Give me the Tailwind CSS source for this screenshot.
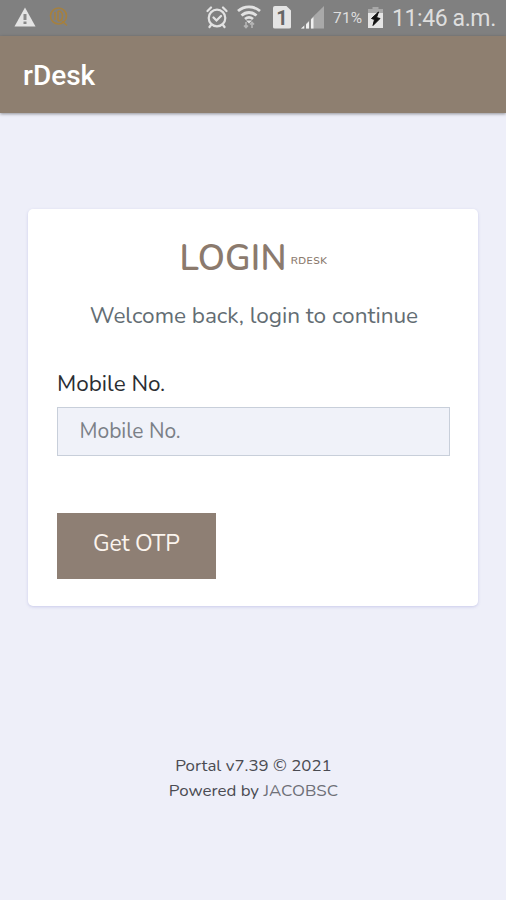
<!DOCTYPE html>
<html lang="en">
<head>
    <meta charset="UTF-8">
    <meta name="viewport" content="width=device-width, initial-scale=1.0">
    <title>rDesk - Login</title>
    <script src="https://cdn.jsdelivr.net/npm/@tailwindcss/browser@4"></script>
</head>
<body class="bg-[#eeeff9] font-['Nunito','Lato',sans-serif] h-[900px] overflow-hidden flex flex-col">
    <!-- Status bar -->
    <div class="h-9 shrink-0 bg-[#808080] flex items-center pl-[14px] pr-[10px] font-['Roboto',sans-serif] text-[#dedede]">
        <svg class="w-[22px] h-[20px] -mt-0.5" viewBox="0 0 22 20">
            <path d="M11 0.500L21.500 19.500H.5z" fill="#e4e4e4"/>
            <path d="M11 7v6M11 14.500v2.500" stroke="#8a8a8a" stroke-width="3"/>
        </svg>
        <svg class="w-5 h-5 ml-[13px] -mt-0.5" viewBox="0 0 20 20" fill="none" stroke="#a5803f" stroke-width="1.600">
            <circle cx="9.500" cy="9" r="8"/>
            <path d="M6 5v8M9 4v10M9 4c3.500 0 4.500 2 4.500 5s-1 5-4.500 5M13 14l5 4.500"/>
        </svg>
        <div class="ml-auto flex items-center">
            <!-- Alarm -->
            <svg class="w-[22px] h-6 -mt-0.5" viewBox="0 0 22 24" fill="none" stroke="#e2e2e2" stroke-width="2.200" stroke-linecap="round">
                <circle cx="11" cy="13" r="8.300"/>
                <path d="M1.500 6l3.500-3.500M20.500 6L17 2.500M5 20l-1.500 2M17 20l1.500 2M7.500 12.500l3 3 4.500-4.500"/>
            </svg>
            <!-- Wifi -->
            <svg class="w-6 h-6 ml-[9px] -mt-0.5" viewBox="0 0 24 24" fill="none" stroke="#e2e2e2" stroke-width="2.800">
                <path d="M1 6c6.500-5.500 15.500-5.500 22 0M4.500 10.500c4.500-4 10.500-4 15 0M8 14c2.500-2 5.500-2 8 0"/>
                <path d="M12 18.500l-3-3h6z" fill="#e2e2e2" stroke="none"/>
                <path d="M9 17v5.500M7 20.500l2 2 2-2M15 23v-5.500M13 19.500l2-2 2 2" stroke="#b5b5b5" stroke-width="1.600"/>
            </svg>
            <div class="ml-[12px] -mt-0.5 w-[18px] h-[23px] bg-[#e4e4e4] rounded-[2px] text-[#666] text-[20px] leading-[24px] font-bold text-center [clip-path:polygon(0_0,72%_0,100%_22%,100%_100%,0_100%)]">1</div>
            <!-- Signal -->
            <svg class="w-6 h-6 ml-[10px] -mt-0.5" viewBox="0 0 24 24">
                <path d="M0 23.500L23 1v22.500z" fill="#a9a9a9"/>
                <path d="M0 23.500l3.500-3v3zM5 23.500v-4l3-3v7zM10 23.500v-9l2.500-2.500v11.500z" fill="#f0f0f0"/>
                <path d="M4.200 18v6M9 14v10" stroke="#808080" stroke-width="1.500"/>
            </svg>
            <span class="ml-2 w-[31px] pt-px text-[15.5px] tracking-[0.2px]">71%</span>
            <svg class="w-[15px] h-[21px] ml-1 -mt-0.5" viewBox="0 0 15 21">
                <path d="M4.500 0h6v2H15v19H0V2h4.500z" fill="#a8a8a8"/>
                <path d="M0 6h15v15H0z" fill="#e5e5e5"/>
                <path d="M10.500 5L3.500 11.500l3 1L5 18.500 12 11.500l-3.500-1z" fill="#111" stroke="#111"/>
            </svg>
            <span class="ml-[9px] w-[104px] pt-0.5 text-[23px] leading-[34px] tracking-[-0.4px] whitespace-nowrap">11:46 a.m.</span>
        </div>
    </div>

    <!-- App bar -->
    <header class="h-[77px] shrink-0 bg-[#8e7f70] pl-[23px] pt-[3px] flex items-center shadow-[0_1px_3px_rgba(0,0,0,0.4)]">
        <h1 class="font-['Roboto',sans-serif] font-medium text-[28px] text-white">rDesk</h1>
    </header>

    <!-- Login card -->
    <main class="mt-24 mx-7 h-[397px] bg-white rounded-[5px] px-[29px] shadow-[0_1px_3px_rgba(100,100,190,0.25)]">
        <div class="pt-[26px] pl-px flex justify-center items-center h-[73px] text-[#8b7a6d]">
            <h2 class="text-[35px] font-[650] leading-[42px] tracking-[0.2px]">LOGIN</h2>
            <span class="ml-1 mt-1 text-[10.5px] font-semibold tracking-[0.5px]">RDESK</span>
        </div>
        <p class="mt-[19px] pl-0.5 text-center text-[22.6px] leading-[30px] tracking-[-0.03px] whitespace-nowrap text-[#636d73]">Welcome back, login to continue</p>
        <form>
            <label for="mobile" class="block mt-[37px] text-[22.5px] leading-8 text-[#2b2e33]">Mobile No.</label>
            <input id="mobile" type="text" placeholder="Mobile No." class="block mt-[7px] w-[393px] h-[49px] border border-[#c8cfda] bg-[#f0f2f9] pl-[21.5px] pb-px text-[21px] placeholder:text-[#7b8087] focus:outline-none">
            <button type="button" class="mt-[56.5px] pb-0.5 w-[158.5px] h-[66px] bg-[#8e7f74] text-[23px] tracking-[-0.2px] text-[#fbf4ee]">Get OTP</button>
        </form>
    </main>

    <!-- Footer -->
    <footer class="mt-[146.5px] pl-px text-center text-[16.9px] leading-[25.500px] text-[#4a4b52]">
        <p>Portal v7.39 © 2021</p>
        <p>Powered by <a href="#" class="text-[#6e7078]">JACOBSC</a></p>
    </footer>
</body>
</html>
